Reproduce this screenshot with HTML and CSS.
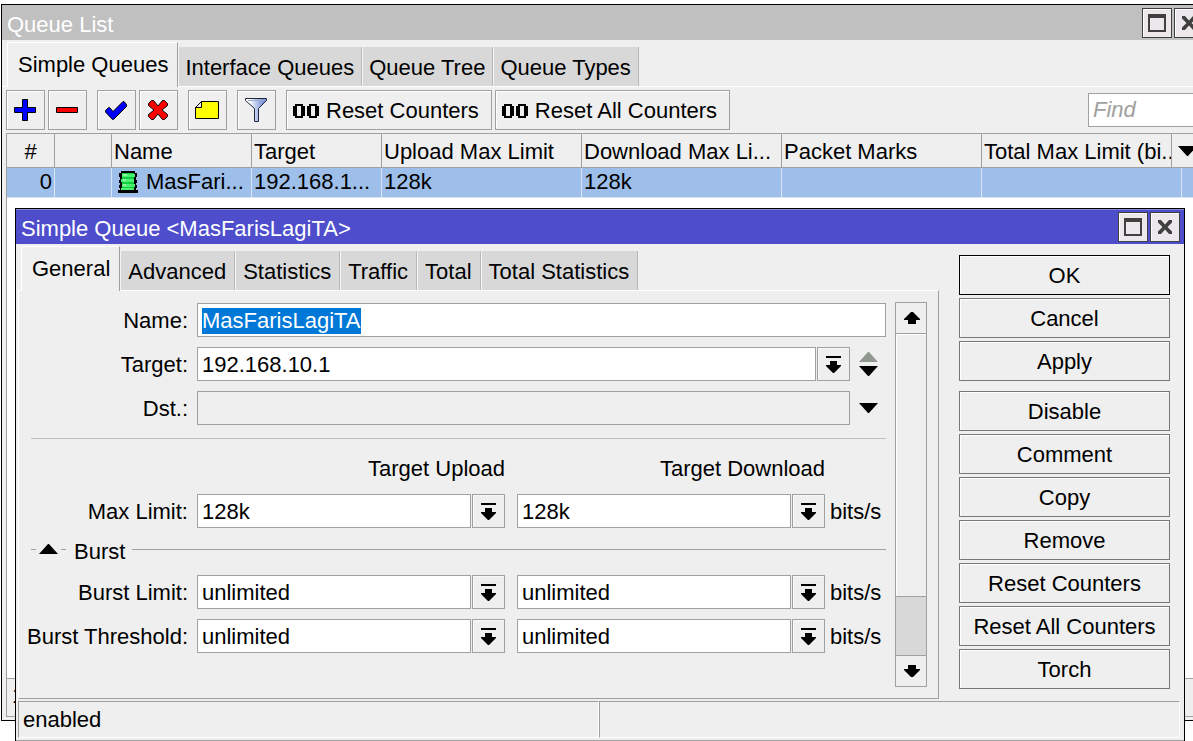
FILE: index.html
```html
<!DOCTYPE html>
<html lang="en">
<head>
<meta charset="utf-8">
<title>Queue List</title>
<link rel="stylesheet" href="styles.css">
</head>
<body>
<svg class="defs" aria-hidden="true">
  <defs>
    <linearGradient id="funnel-fill" x1="0" x2="1" y1="0" y2="0"><stop offset="0.200" stop-color="#ffffff"/><stop offset="0.800" stop-color="#7f96dc"/></linearGradient>
    <symbol id="i-max" viewBox="0 0 18 18"><path fill="#404040" fill-rule="evenodd" d="M0 0h18v18H0zM2 4v12h14V4z"/></symbol>
    <symbol id="i-close" viewBox="0 0 14 14"><path fill="#404040" d="M0 0h3l4 4.500L11 0h3v2.500L9.500 7l4.500 4.500V14h-3L7 9.500 3 14H0v-2.500L4.500 7 0 2.500z"/></symbol>
    <symbol id="i-drop" viewBox="0 0 15 17"><path d="M0 0h15v2H0zM4 5h7v4h4v1l-7 7H7l-7-7V9h4z"/></symbol>
    <symbol id="i-up" viewBox="0 0 16 12"><path d="M7 0h2l7 7v1h-4v4H4V8H0V7z"/></symbol>
    <symbol id="i-down" viewBox="0 0 16 12"><path d="M4 0h8v4h4v1l-7 7H7L0 5V4h4z"/></symbol>
    <symbol id="i-tri-down" viewBox="0 0 19 10"><path d="M0 0h19l-9 10H9z"/></symbol>
    <symbol id="i-tri-up" viewBox="0 0 19 10"><path d="M0 10h19L10 0H9z"/></symbol>
    <symbol id="i-zeros" viewBox="0 0 26 14"><path fill-rule="evenodd" d="M2 0h8v2h2v10h-2v2H2v-2H0V2h2zM4 2v10h4V2zM16 0h8v2h2v10h-2v2h-8v-2h-2V2h2zM18 2v10h4V2z"/></symbol>
  </defs>
</svg>

<section class="window window-list" aria-label="Queue List">
  <header class="titlebar">
    <h1 class="title">Queue List</h1>
    <button class="win-btn" aria-label="Maximize"><svg width="18" height="18"><use href="#i-max"/></svg></button>
    <button class="win-btn" aria-label="Close"><svg width="14" height="14"><use href="#i-close"/></svg></button>
  </header>
  <nav class="tabs list-tabs">
    <button class="tab active">Simple Queues</button>
    <button class="tab">Interface Queues</button>
    <button class="tab">Queue Tree</button>
    <button class="tab">Queue Types</button>
  </nav>
  <div class="toolbar">
    <div class="tool-group">
      <button class="tool" aria-label="Add"><svg width="22" height="22"><path fill="#0000ff" stroke="#000" d="M8.500 .5h5v8h8v5h-8v8h-5v-8h-8v-5h8z"/></svg></button>
      <button class="tool" aria-label="Remove"><svg width="22" height="6"><path fill="#ff0000" stroke="#000" d="M.5 .5h21v5H.5z"/></svg></button>
    </div>
    <div class="tool-group">
      <button class="tool" aria-label="Enable"><svg width="22" height="19"><path fill="#0000ff" stroke="#000" d="M.5 9.500l3-3h1l3.500 4 10-10h1l2.500 3v2L8.500 18.500h-1L.5 11z"/></svg></button>
      <button class="tool" aria-label="Disable"><svg width="20" height="20"><path fill="#ff0000" stroke="#000" d="M.5 3.500l3-3h2L10 6l4.500-5.500h2l3 3v2L14 10l5.500 4.500v2l-3 3h-2L10 14l-4.500 5.500h-2l-3-3v-2L6 10 .5 5.500z"/></svg></button>
    </div>
    <button class="tool" aria-label="Comment"><svg width="24" height="18"><path fill="#ffff00" stroke="#000" d="M6.500 .5h17v17H.5v-11z"/><path fill="#efefef" stroke="#000" d="M6.500 .5v6h-6z"/></svg></button>
    <button class="tool" aria-label="Filter"><svg width="22" height="24"><path fill="url(#funnel-fill)" stroke="#20283c" d="M.5 .5h21v2l-8 8v13h-4v-13l-9-8z"/><path fill="none" stroke="#9aabc8" d="M3 2.500h16"/></svg></button>
    <div class="tool-group">
      <button class="tool wide"><svg width="26" height="14"><use href="#i-zeros"/></svg>Reset Counters</button>
      <button class="tool wide"><svg width="26" height="14"><use href="#i-zeros"/></svg>Reset All Counters</button>
    </div>
    <input class="find" type="text" placeholder="Find" aria-label="Find">
  </div>
  <div class="list">
    <table class="grid">
      <colgroup><col class="c-num"><col class="c-flag"><col class="c-name"><col class="c-target"><col class="c-limit"><col class="c-limit"><col class="c-limit"><col class="c-limit"><col></colgroup>
      <thead>
        <tr><th class="center">#</th><th></th><th>Name</th><th>Target</th><th>Upload Max Limit</th><th>Download Max Li...</th><th>Packet Marks</th><th>Total Max Limit (bi...</th><th></th></tr>
      </thead>
      <tbody>
        <tr><td class="right">0</td><td></td><td><span class="name-cell"><svg width="20" height="22" shape-rendering="crispEdges"><path d="M3 0h14v2h2v4h-1v3h1v3h-1v2h1v3h-1v2h2v3H0v-3h2v-2H1v-3h1v-2H1V9h1V6H1V2h2z"/><path fill="#10d040" d="M4 2h12v17H4z"/><path fill="#4cf070" d="M4 3h13v3H4zM3 8h13v3H3zM4 13h13v3H4zM3 17h13v2H3z"/><path fill="#8cf8a0" d="M5 3h4v2H5zM5 8h3v2H5zM5 13h3v2H5z"/></svg>MasFari...</span></td><td>192.168.1...</td><td>128k</td><td>128k</td><td></td><td></td><td></td></tr>
      </tbody>
    </table>
    <button class="col-menu" aria-label="Columns"><svg width="19" height="10"><use href="#i-tri-down"/></svg></button>
  </div>
  <footer class="list-status">1 item</footer>
</section>

<section class="window window-queue" aria-label="Simple Queue">
  <header class="titlebar">
    <h2 class="title">Simple Queue &lt;MasFarisLagiTA&gt;</h2>
    <button class="win-btn" aria-label="Maximize"><svg width="18" height="18"><use href="#i-max"/></svg></button>
    <button class="win-btn" aria-label="Close"><svg width="14" height="14"><use href="#i-close"/></svg></button>
  </header>
  <div class="queue-body">
    <div class="main">
      <nav class="tabs queue-tabs">
        <button class="tab active">General</button>
        <button class="tab">Advanced</button>
        <button class="tab">Statistics</button>
        <button class="tab">Traffic</button>
        <button class="tab">Total</button>
        <button class="tab">Total Statistics</button>
      </nav>
      <div class="panel">
        <form class="form">
          <div class="row"><label class="label" for="name">Name:</label><input class="field" id="name" type="text" value="MasFarisLagiTA"></div>
          <div class="row"><label class="label" for="target">Target:</label>
            <div class="combo"><input class="field" id="target" type="text" value="192.168.10.1"><button type="button" class="drop" aria-label="Choose target"><svg width="15" height="17"><use href="#i-drop"/></svg></button></div>
            <div class="spin"><button type="button" class="bare muted" aria-label="Remove target"><svg width="19" height="10"><use href="#i-tri-up"/></svg></button><button type="button" class="bare" aria-label="Add target"><svg width="19" height="10"><use href="#i-tri-down"/></svg></button></div>
          </div>
          <div class="row"><label class="label" for="dst">Dst.:</label>
            <div class="combo"><input class="field" id="dst" type="text" disabled></div>
            <div class="spin"><button type="button" class="bare" aria-label="Add destination"><svg width="19" height="10"><use href="#i-tri-down"/></svg></button></div>
          </div>
          <hr class="divider">
          <div class="row heads"><span class="label"></span>
            <div class="pairs"><span class="head">Target Upload</span><span class="head">Target Download</span><span class="unit"></span></div>
          </div>
          <div class="row"><label class="label" for="max-up">Max Limit:</label>
            <div class="pairs">
              <div class="combo"><input class="field" id="max-up" type="text" value="128k"><button type="button" class="drop" aria-label="Upload max limit"><svg width="15" height="17"><use href="#i-drop"/></svg></button></div>
              <div class="combo"><input class="field" aria-label="Download max limit" type="text" value="128k"><button type="button" class="drop" aria-label="Choose download max limit"><svg width="15" height="17"><use href="#i-drop"/></svg></button></div>
              <span class="unit">bits/s</span>
            </div>
          </div>
          <div class="section"><i class="dash"></i><button type="button" class="bare" aria-label="Collapse Burst"><svg width="19" height="10"><use href="#i-tri-up"/></svg></button><i class="dash"></i><span class="section-name">Burst</span><i class="rule"></i></div>
          <div class="row"><label class="label" for="burst-up">Burst Limit:</label>
            <div class="pairs">
              <div class="combo"><input class="field" id="burst-up" type="text" value="unlimited"><button type="button" class="drop" aria-label="Upload burst limit"><svg width="15" height="17"><use href="#i-drop"/></svg></button></div>
              <div class="combo"><input class="field" aria-label="Download burst limit" type="text" value="unlimited"><button type="button" class="drop" aria-label="Choose download burst limit"><svg width="15" height="17"><use href="#i-drop"/></svg></button></div>
              <span class="unit">bits/s</span>
            </div>
          </div>
          <div class="row"><label class="label" for="thr-up">Burst Threshold:</label>
            <div class="pairs">
              <div class="combo"><input class="field" id="thr-up" type="text" value="unlimited"><button type="button" class="drop" aria-label="Upload burst threshold"><svg width="15" height="17"><use href="#i-drop"/></svg></button></div>
              <div class="combo"><input class="field" aria-label="Download burst threshold" type="text" value="unlimited"><button type="button" class="drop" aria-label="Choose download burst threshold"><svg width="15" height="17"><use href="#i-drop"/></svg></button></div>
              <span class="unit">bits/s</span>
            </div>
          </div>
        </form>
        <div class="scrollbar">
          <button class="scroll-btn" aria-label="Scroll up"><svg width="16" height="12"><use href="#i-up"/></svg></button>
          <div class="thumb"></div>
          <div class="track"></div>
          <button class="scroll-btn" aria-label="Scroll down"><svg width="16" height="12"><use href="#i-down"/></svg></button>
        </div>
      </div>
    </div>
    <aside class="actions">
      <button class="action default">OK</button>
      <button class="action">Cancel</button>
      <button class="action last">Apply</button>
      <button class="action">Disable</button>
      <button class="action">Comment</button>
      <button class="action">Copy</button>
      <button class="action">Remove</button>
      <button class="action">Reset Counters</button>
      <button class="action">Reset All Counters</button>
      <button class="action">Torch</button>
    </aside>
  </div>
  <footer class="queue-status"><span class="status-cell">enabled</span><span class="status-cell"></span></footer>
</section>
<script src="main.js"></script>
</body>
</html>
```
FILE: styles.css
```css
* { box-sizing: border-box; }
html, body { height: 100%; }
body {
  margin: 0;
  position: relative;
  overflow: hidden;
  background: #fff;
  color: #000;
  font: 22px/30px "Liberation Sans", Arial, sans-serif;
}
button, input { font: inherit; color: inherit; margin: 0; border-radius: 0; outline: 0; }
button { background: #efefef; padding: 0; white-space: nowrap; }
svg { display: block; flex: none; }
.defs { position: absolute; width: 0; height: 0; }

/* Windows */
.window { position: absolute; display: flex; flex-direction: column; background: #efefef; border: 1px solid #000; }
.window-list { left: 1px; right: -16px; top: 4px; bottom: 20px; }
.window-queue { left: 15px; right: 8px; top: 208px; }
.titlebar { display: flex; align-items: center; gap: 2px; height: 35px; padding: 0 4px; background: #c0c0c0; color: #fff; }
.window-queue .titlebar { background: #4e4ecd; border-top: 1px solid #8a8ad0; }
.title { flex: 1; margin: 0; padding: 4px 0 0 1px; font-size: 22px; font-weight: 400; line-height: 30px; }
.win-btn { display: grid; place-items: center; width: 30px; height: 30px; border: 1px solid #404040; background: #ebe7ea; box-shadow: inset 1px 1px #fff; }

/* Tabs */
.tabs { display: flex; align-items: flex-end; height: 46px; }
.list-tabs { height: 47px; padding-left: 5px; border-bottom: 1px solid #fff; }
.queue-tabs { padding-left: 3px; }
.tab { height: 39px; padding: 2px 7px 0 6px; border: 0; border-left: 1px solid #f4f4f4; border-right: 1px solid #b8b8b8; background: #d8d8d8; }
.queue-tabs .tab { padding: 2px 8px 0 7px; }
.tabs .tab.active { position: relative; height: 45px; margin-bottom: -1px; padding: 0 9px 0 10px; border-top: 1px solid #fff; border-left-color: #fff; border-right-color: #a0a0a0; background: #efefef; }

/* Queue list */
.toolbar { display: flex; align-items: center; gap: 10px; padding: 3px 4px; }
.tool-group { display: flex; gap: 3px; }
.tool { display: flex; align-items: center; justify-content: center; width: 39px; height: 40px; padding-right: 1px; border: 1px solid #a0a0a0; box-shadow: inset 1px 1px #fff; }
.tool.wide { width: auto; gap: 7px; padding: 2px 12px 0 6px; }
.find { width: 116px; height: 34px; margin-left: auto; padding: 0 4px; border: 1px solid #a0a0a0; background: #fff; }
.find::placeholder { color: #a0a0a0; font-style: italic; opacity: 1; }
.list { position: relative; flex: 1; margin: 0 4px; border: 1px solid #a0a0a0; background: #fff; overflow: hidden; }
.grid { width: 100%; table-layout: fixed; border-collapse: separate; border-spacing: 0; }
.c-num { width: 48px; } .c-flag { width: 57px; } .c-name { width: 140px; } .c-target { width: 130px; } .c-limit { width: 200px; }
.grid th, .grid td { padding: 0 2px; white-space: nowrap; overflow: hidden; text-align: left; font-weight: 400; }
.grid th { height: 34px; padding-top: 2px; background: #efefef; border-right: 1px solid #a0a0a0; border-bottom: 1px solid #a0a0a0; }
.grid td { height: 30px; padding-bottom: 2px; line-height: 26px; background: #9dbfe9; border-right: 1px solid #d8e5f6; border-bottom: 1px solid #d8e5f6; }
.grid .center { text-align: center; }
.grid .right { text-align: right; }
.name-cell { display: flex; align-items: center; gap: 8px; padding-left: 4px; }
.col-menu { position: absolute; top: 0; right: 0; width: 32px; height: 34px; padding-left: 6px; border: 0; border-left: 1px solid #a0a0a0; border-bottom: 1px solid #a0a0a0; }
.list-status { height: 38px; margin: 0 4px 3px; padding: 2px 5px; border-left: 1px solid #a0a0a0; border-bottom: 1px solid #a0a0a0; }

/* Queue dialog */
.queue-body { display: flex; gap: 20px; padding: 0 14px 2px 2px; }
.main { flex: 1; min-width: 0; display: flex; flex-direction: column; }
.panel { flex: 1; display: flex; gap: 9px; padding: 11px 11px 11px 12px; border: 1px solid; border-color: #fff #a0a0a0 #a0a0a0 #fff; }
.form { flex: 1; min-width: 0; padding: 1px 0 24px; }
.row { display: flex; align-items: center; gap: 9px; margin-bottom: 10px; }
.label { display: flex; justify-content: flex-end; flex: none; width: 157px; padding-top: 2px; white-space: nowrap; }
.field { flex: 1; min-width: 0; width: 100%; height: 34px; padding: 2px 4px 0; border: 1px solid #a0a0a0; background: #fff; }
.field:disabled { background: #efefef; }
.field::selection { background: #0078d7; color: #fff; }
.combo { display: flex; flex: 1; min-width: 0; gap: 1px; }
.drop { display: grid; place-items: center; flex: none; width: 33px; height: 34px; border: 1px solid #a0a0a0; box-shadow: inset 1px 1px #f8f8f8; }
.spin { display: flex; flex-direction: column; gap: 4px; flex: none; width: 27px; }
.bare { border: 0; width: 19px; height: 10px; background: none; }
.muted { fill: #909890; }
.divider { height: 1px; margin: 13px 0 12px; border: 0; background: #c0c0c0; }
.heads { height: 34px; margin-bottom: 9px; }
.pairs { display: flex; align-items: center; flex: 1; min-width: 0; gap: 12px; }
.head { flex: 1; padding-top: 2px; text-align: right; }
.unit { flex: none; width: 56px; margin-left: -7px; padding-top: 2px; }
.section { display: flex; align-items: center; height: 34px; margin: -6px 0 9px; gap: 3px; }
.dash { width: 5px; height: 1px; background: #a0a0a0; }
.rule { flex: 1; height: 1px; background: #a0a0a0; }
.section-name { padding: 5px 4px 0 5px; }
.scrollbar { display: flex; flex-direction: column; flex: none; width: 32px; border: 1px solid #a0a0a0; }
.scroll-btn { display: grid; place-items: center; height: 30px; padding-left: 1px; border: 0; }
.thumb { flex: 9; border: 1px solid #a0a0a0; border-width: 1px 0; background: #efefef; box-shadow: inset 1px 1px #fff; }
.track { flex: 2; background: #d8d8d8; border-bottom: 1px solid #a0a0a0; }
.actions { display: flex; flex-direction: column; gap: 3px; flex: none; width: 211px; padding-top: 11px; }
.action { height: 40px; padding-top: 2px; border: 1px solid #787878; box-shadow: inset 1px 1px #fff; }
.action.default { border-color: #000; }
.action.last { margin-bottom: 7px; }
.queue-status { display: flex; padding: 0 4px 2px 2px; border-bottom: 1px solid #a0a0a0; }
.status-cell { flex: 1; height: 37px; padding: 3px 4px; border: 1px solid; border-color: #a0a0a0 #fff #fff #a0a0a0; }
```
FILE: main.js
```js
const nameField = document.getElementById("name");
nameField.focus();
nameField.select();
```
